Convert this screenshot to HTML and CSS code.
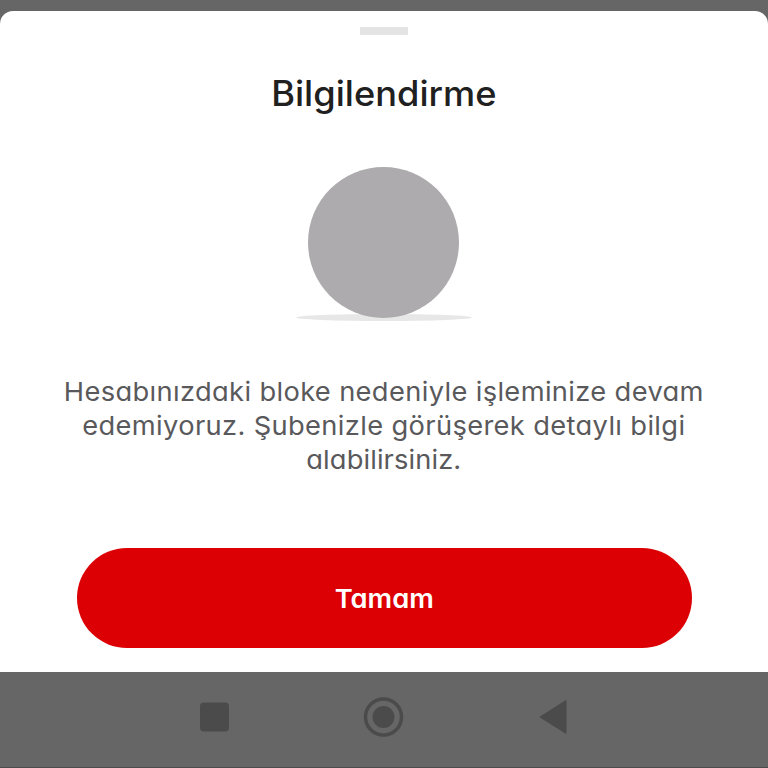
FILE: index.html
```
<!DOCTYPE html>
<html lang="tr">
<head>
<meta charset="utf-8">
<title>Bilgilendirme</title>
<link rel="stylesheet" href="styles.css">
</head>
<body>
<main class="sheet">
  <div class="handle"></div>
  <h1 class="title">Bilgilendirme</h1>
  <svg class="art" width="176" height="156" viewBox="0 0 176 156">
    <ellipse cx="88" cy="151.500" rx="88" ry="3.500" fill="#e7e7e7"/>
    <circle cx="87.500" cy="76.500" r="75.500" fill="#adabad"/>
  </svg>
  <p class="message"><span class="line">Hesabınızdaki bloke nedeniyle işleminize devam</span><span class="line">edemiyoruz. Şubenizle görüşerek detaylı bilgi</span><span class="line last">alabilirsiniz.</span></p>
  <button class="confirm"><span class="label">Tamam</span></button>
</main>
<nav class="navbar">
  <svg width="768" height="96" viewBox="0 672 768 96">
    <rect x="200" y="702.500" width="29" height="29" rx="4" fill="#4b4b4b"/>
    <circle cx="383.500" cy="717" r="18" fill="none" stroke="#4b4b4b" stroke-width="3.500"/>
    <circle cx="383.500" cy="717" r="11" fill="#4b4b4b"/>
    <path d="M540 717L566 700.500V733.500Z" fill="#4b4b4b" stroke="#4b4b4b" stroke-linejoin="round"/>
    <rect x="0" y="767" width="768" height="1" fill="#4b4b4b"/>
  </svg>
</nav>
</body>
</html>
```
FILE: styles.css
```
* { box-sizing: border-box; }
body {
  margin: 0;
  height: 768px;
  padding-top: 10.500px;
  overflow: hidden;
  background: #666;
  font-family: Inter, "Noto Sans", sans-serif;
  font-feature-settings: "cv11";
}
.sheet {
  display: flex;
  flex-direction: column;
  align-items: center;
  height: 661.500px;
  background: #fff;
  border-radius: 13px 13px 0 0;
}
.handle {
  width: 48px;
  height: 8px;
  margin-top: 16.500px;
  background: #e4e4e5;
}
.title {
  margin: 34px 0 0;
  height: 48px;
  font: 550 35px/48px Inter, sans-serif;
  font-feature-settings: "cv11";
  color: #202020;
  transform: scaleX(1.035);
}
.art { margin-top: 49px; flex: none; }
.message {
  display: flex;
  flex-direction: column;
  align-items: center;
  margin: 53px 0 0;
  font-size: 26px;
  line-height: 34px;
  color: #59595c;
  white-space: nowrap;
  transform: scaleX(1.05);
}
.line { letter-spacing: .33px; }
.last { letter-spacing: .1px; }
.confirm {
  width: 615px;
  height: 100px;
  margin-top: 71px;
  flex: none;
  border: 0;
  border-radius: 50px;
  background: #dc0004;
  color: #fff;
  font: 600 26px/100px Inter, sans-serif;
  font-feature-settings: "cv11";
}
.label {
  display: inline-block;
  transform: scaleX(1.05);
}
.navbar { height: 96px; }
.navbar svg { display: block; }
```
